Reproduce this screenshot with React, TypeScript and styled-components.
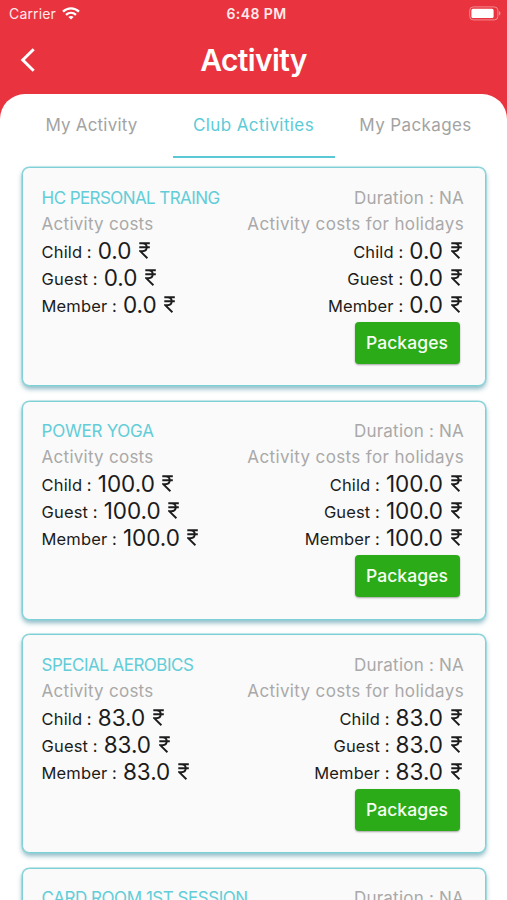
import React from "react";
import styled, { createGlobalStyle } from "styled-components";

const GlobalStyle = createGlobalStyle`
  * { box-sizing: border-box; }
  html, body { margin: 0; padding: 0; }
  body {
    background: #fff;
    font-family: Inter, "Liberation Sans", sans-serif;
    overflow: hidden;
  }
`;

const Screen = styled.div`
  width: 507px;
  height: 900px;
  overflow: hidden;
  display: flex;
  flex-direction: column;
  background: #e9343f;
`;

const StatusBar = styled.div`
  display: grid;
  grid-template-columns: 1fr auto 1fr;
  align-items: center;
  height: 27px;
  flex: none;
  padding: 0 6px 0 9px;
  color: #ffe9ea;
  font-size: 14px;
  line-height: 27px;
`;

const Carrier = styled.div`
  display: flex;
  align-items: center;
  gap: 6px;
  letter-spacing: 0.15px;
`;

const Clock = styled.div`
  font-weight: 600;
  letter-spacing: 0.4px;
  padding-left: 3px;
`;

const Battery = styled.svg`
  justify-self: end;
`;

const Header = styled.header`
  display: grid;
  grid-template-columns: 60px 1fr 60px;
  align-items: center;
  height: 66.5px;
  flex: none;
`;

const BackButton = styled.button`
  display: flex;
  padding: 0 0 1px 20px;
  border: 0;
  background: none;
`;

const Title = styled.h1`
  margin: 0;
  color: #fff;
  font-size: 30px;
  font-weight: 600;
  line-height: 66px;
  letter-spacing: -0.65px;
  text-align: center;
`;

const Sheet = styled.main`
  flex: 1;
  min-height: 0;
  overflow: hidden;
  border-radius: 25px 25px 0 0;
  background: #fff;
`;

const Tabs = styled.nav`
  display: grid;
  grid-template-columns: repeat(3, 162px);
  justify-content: center;
  height: 64px;
`;

const Tab = styled.button<{ $active?: boolean; $tracking: number }>`
  padding: 0;
  border: 0;
  border-bottom: 2px solid ${(p) => (p.$active ? "#5ac8d6" : "transparent")};
  background: none;
  color: ${(p) => (p.$active ? "#5ccbd8" : "#a3a3a3")};
  font: 400 17px/62px Inter, sans-serif;
  letter-spacing: ${(p) => p.$tracking}px;
  white-space: nowrap;
`;

const CardList = styled.div`
  display: flex;
  flex-direction: column;
  gap: 14.5px;
  padding: 9.9px 20.6px 0 21.6px;
`;

const Card = styled.article`
  flex: none;
  height: 219px;
  padding: 16.6px 21.4px 0 19px;
  border: 1px solid #7ed0d6;
  border-radius: 7.5px;
  background: #fafafa;
  box-shadow: 0 0 0 0.6px #8ed5da, 0 3px 5px rgba(45, 125, 145, 0.55);
`;

const CardRow = styled.div`
  display: flex;
  justify-content: space-between;
  line-height: 26px;
  white-space: nowrap;
`;

const ActivityName = styled.span<{ $tracking: number }>`
  color: #62cdd8;
  font-size: 17px;
  letter-spacing: ${(p) => p.$tracking}px;
`;

const Muted = styled.span<{ $tracking?: number }>`
  color: #a9a9a9;
  font-size: 17px;
  letter-spacing: ${(p) => p.$tracking ?? 0.36}px;
`;

const PriceColumn = styled.div<{ $right?: boolean }>`
  display: flex;
  flex-direction: column;
  align-items: ${(p) => (p.$right ? "flex-end" : "flex-start")};
  padding-right: ${(p) => (p.$right ? "2.5px" : "0")};
`;

const PriceLine = styled.div`
  display: flex;
  align-items: flex-start;
  height: 27px;
  color: #1c1c1c;
`;

const PriceLabel = styled.span`
  margin-right: 6px;
  font-size: 16.5px;
  line-height: 31px;
  letter-spacing: 0.12px;
`;

const PriceValue = styled.span`
  font-size: 22.5px;
  line-height: 27px;
`;

const Rupee = styled.svg`
  margin: 5px 0 0 7.5px;
`;

const PackagesButton = styled.button`
  width: 105px;
  height: 42px;
  margin: 4px 2px 0 0;
  padding: 0;
  border: 0;
  border-radius: 4px;
  background: #2aab17;
  color: #f4fff2;
  font: 500 17.5px/42px Inter, sans-serif;
  letter-spacing: 0.1px;
  box-shadow: 0 1px 2px rgba(0, 0, 0, 0.35);
`;

type Activity = { name: string; cost: string; tracking: number };

const activities: Activity[] = [
  { name: "HC PERSONAL TRAING", cost: "0.0", tracking: -0.58 },
  { name: "POWER YOGA", cost: "100.0", tracking: -0.25 },
  { name: "SPECIAL AEROBICS", cost: "83.0", tracking: -0.52 },
  { name: "CARD ROOM 1ST SESSION", cost: "0.0", tracking: -0.46 },
];

function Prices({ cost, right }: { cost: string; right?: boolean }) {
  return (
    <PriceColumn $right={right}>
      {["Child", "Guest", "Member"].map((who) => (
        <PriceLine key={who}>
          <PriceLabel>{who} :</PriceLabel>
          <PriceValue>{cost}</PriceValue>
          <Rupee width="11" height="17" viewBox="0 0 11 17" fill="none" stroke="#1c1c1c" strokeWidth="1.9">
            <path d="M0.3 1.3H10.8M0.3 5.2H10.8M0.3 1.3H3.4C9.2 1.3 9.2 9.2 3.4 9.2H1.2L8.4 16.2" />
          </Rupee>
        </PriceLine>
      ))}
      {right && <PackagesButton>Packages</PackagesButton>}
    </PriceColumn>
  );
}

export default function App() {
  return (
    <>
      <GlobalStyle />
      <Screen>
        <StatusBar>
          <Carrier>
            Carrier
            <svg width="18" height="13" viewBox="0 0 18 13" fill="none" stroke="#fff" strokeWidth="2.3">
              <path d="M1 4.6C5.6 0.2 12.4 0.2 17 4.6" />
              <path d="M4 7.8C7 5.1 11 5.1 14 7.8" />
              <path d="M6.4 10.1C7.9 8.7 10.1 8.7 11.6 10.1L9 12.6Z" fill="#fff" stroke="none" />
            </svg>
          </Carrier>
          <Clock>6:48 PM</Clock>
          <Battery width="32" height="15" viewBox="0 0 32 15">
            <rect x="0.7" y="0.9" width="28.2" height="13" rx="3.6" fill="none" stroke="#f28a91" strokeWidth="1" />
            <rect x="2.4" y="2.8" width="22.2" height="9.2" rx="1.6" fill="#fff" />
            <path d="M30.2 5.3C31.8 6 31.8 8.8 30.2 9.5Z" fill="#f6a3a8" />
          </Battery>
        </StatusBar>
        <Header>
          <BackButton aria-label="Back">
            <svg width="16" height="24" viewBox="0 0 16 24" fill="none" stroke="#fff" strokeWidth="3">
              <path d="M13.7 1.3L2.8 12L13.7 22.7" />
            </svg>
          </BackButton>
          <Title>Activity</Title>
        </Header>
        <Sheet>
          <Tabs>
            <Tab $tracking={0.2}>My Activity</Tab>
            <Tab $active $tracking={0.4}>Club Activities</Tab>
            <Tab $tracking={0.38}>My Packages</Tab>
          </Tabs>
          <CardList>
            {activities.map((a) => (
              <Card key={a.name}>
                <CardRow>
                  <ActivityName $tracking={a.tracking}>{a.name}</ActivityName>
                  <Muted $tracking={0.22}>Duration : NA</Muted>
                </CardRow>
                <CardRow>
                  <Muted $tracking={0.26}>Activity costs</Muted>
                  <Muted>Activity costs for holidays</Muted>
                </CardRow>
                <CardRow>
                  <Prices cost={a.cost} />
                  <Prices cost={a.cost} right />
                </CardRow>
              </Card>
            ))}
          </CardList>
        </Sheet>
      </Screen>
    </>
  );
}
